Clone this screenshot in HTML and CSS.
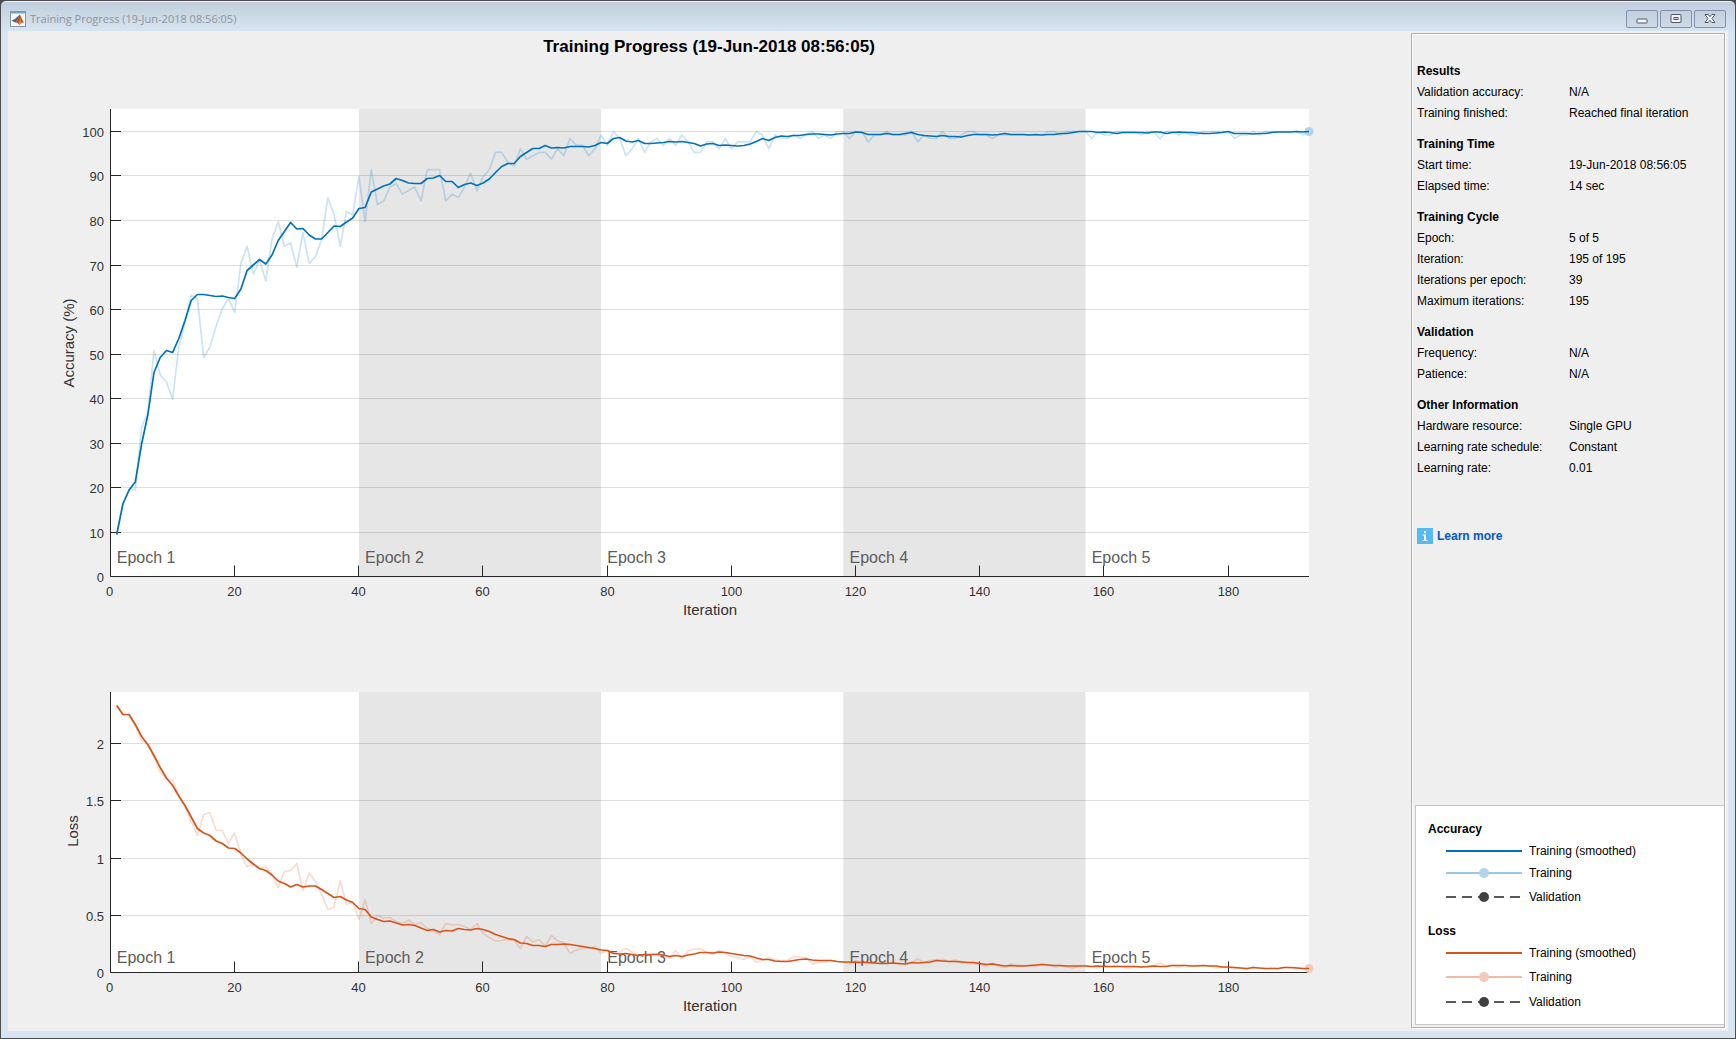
FILE: index.html
```html
<!DOCTYPE html>
<html lang="en">
<head>
<meta charset="utf-8">
<title>Training Progress (19-Jun-2018 08:56:05)</title>
<link rel="stylesheet" href="styles.css">
</head>
<body>
<div class="window">
  <header class="titlebar">
    <svg class="app-icon" viewBox="0 0 16 16" aria-hidden="true">
      <rect x=".5" y=".5" width="15" height="15" fill="#f6f8fa" stroke="#8496a8"/>
      <path d="M1 1h14v1.500H1z" fill="#6fa5cc"/>
      <path d="M1.500 9.500 5 8l2-2 2.500-2-2.500 6-2 1.500z" fill="#3b6a9a"/>
      <path d="M5 11.500 7 10l2.500-6.500c1.500 1 2.500 6 5 8.500-2-1-3-.5-5 2-.8-1.500-2-3-4.500-2.500z" fill="#c8441c"/>
      <path d="M9.500 4c.8 3 .5 6-1 8.500l1 1.500c1-1 1.500-2 2-2.500-1-2-1-5.500-2-7.500z" fill="#f08a2c"/>
    </svg>
    <span class="titlebar-text">Training Progress (19-Jun-2018 08:56:05)</span>
    <div class="window-buttons">
      <button type="button" aria-label="Minimize"><svg viewBox="0 0 14 12"><rect x="2" y="6" width="10" height="4" rx=".5" fill="#f4f6f9" stroke="#4f5568"/></svg></button>
      <button type="button" aria-label="Maximize"><svg viewBox="0 0 14 12"><rect x="2" y="1.500" width="10" height="8" rx=".5" fill="#f4f6f9" stroke="#4f5568"/><rect x="5" y="4.500" width="4" height="2" fill="#c6d2e0" stroke="#4f5568"/></svg></button>
      <button type="button" aria-label="Close"><svg viewBox="0 0 14 12"><path d="M2 1.500h3.200L7 3.700l1.800-2.200H12L9 5.500l3 4H8.800L7 7.300 5.200 9.500H2l3-4z" fill="#f4f6f9" stroke="#4f5568"/></svg></button>
    </div>
  </header>

  <main class="content">
    <svg class="figure" viewBox="8 31 1403 1000" role="img" aria-label="Training accuracy and loss by iteration">
      <text class="figure-title" x="709" y="52">Training Progress (19-Jun-2018 08:56:05)</text>
      <g id="accuracy-plot"></g>
      <g id="loss-plot"></g>
    </svg>

    <aside class="panel">
      <section class="group">
        <h2>Results</h2>
        <dl>
          <dt>Validation accuracy:</dt><dd>N/A</dd>
          <dt>Training finished:</dt><dd>Reached final iteration</dd>
        </dl>
      </section>
      <section class="group">
        <h2>Training Time</h2>
        <dl>
          <dt>Start time:</dt><dd>19-Jun-2018 08:56:05</dd>
          <dt>Elapsed time:</dt><dd>14 sec</dd>
        </dl>
      </section>
      <section class="group">
        <h2>Training Cycle</h2>
        <dl>
          <dt>Epoch:</dt><dd>5 of 5</dd>
          <dt>Iteration:</dt><dd>195 of 195</dd>
          <dt>Iterations per epoch:</dt><dd>39</dd>
          <dt>Maximum iterations:</dt><dd>195</dd>
        </dl>
      </section>
      <section class="group">
        <h2>Validation</h2>
        <dl>
          <dt>Frequency:</dt><dd>N/A</dd>
          <dt>Patience:</dt><dd>N/A</dd>
        </dl>
      </section>
      <section class="group">
        <h2>Other Information</h2>
        <dl>
          <dt>Hardware resource:</dt><dd>Single GPU</dd>
          <dt>Learning rate schedule:</dt><dd>Constant</dd>
          <dt>Learning rate:</dt><dd>0.01</dd>
        </dl>
      </section>
      <a class="learn-more" href="#">
        <svg viewBox="0 0 16 16" aria-hidden="true"><rect width="16" height="16" fill="#56bbf3"/><path d="M7 3h2v2H7zM5.500 6.500H9V12h1.500v1h-5v-1H7V7.500H5.500z" fill="#fff"/></svg>
        Learn more
      </a>

      <section class="legend">
        <h2>Accuracy</h2>
        <ul class="accuracy">
          <li><svg viewBox="0 0 76 12"><path class="smooth" d="M0 6h76"/></svg>Training (smoothed)</li>
          <li><svg viewBox="0 0 76 12"><path class="raw" d="M0 6h76"/><circle class="raw-dot" cx="38" cy="6" r="5"/></svg>Training</li>
          <li class="roomy"><svg viewBox="0 0 76 12"><path class="valid" d="M0 6h76"/><circle class="valid-dot" cx="38" cy="6" r="5"/></svg>Validation</li>
        </ul>
        <h2>Loss</h2>
        <ul class="loss">
          <li><svg viewBox="0 0 76 12"><path class="smooth" d="M0 6h76"/></svg>Training (smoothed)</li>
          <li class="roomy"><svg viewBox="0 0 76 12"><path class="raw" d="M0 6h76"/><circle class="raw-dot" cx="38" cy="6" r="5"/></svg>Training</li>
          <li class="roomy"><svg viewBox="0 0 76 12"><path class="valid" d="M0 6h76"/><circle class="valid-dot" cx="38" cy="6" r="5"/></svg>Validation</li>
        </ul>
      </section>
    </aside>
  </main>
</div>
<script src="charts.js"></script>
</body>
</html>
```
FILE: styles.css
```css
* { box-sizing: border-box; }

body {
  margin: 0;
  background: #4a4a52;
  font-family: "Liberation Sans", Arial, sans-serif;
  font-size: 12px;
  color: #000;
}

.window {
  display: flex;
  flex-direction: column;
  min-height: 100vh;
  padding: 1px 7px 7px;
  border: 1px solid #4c4c52;
  border-radius: 6px 6px 0 0;
  background: linear-gradient(#c0cddc, #d7e4f1 30px);
  box-shadow: inset 0 1px #eef3f8;
}

.titlebar {
  display: flex;
  align-items: center;
  height: 29px;
  padding: 4px 2px 0;
}

.app-icon { width: 16px; height: 16px; }

.titlebar-text {
  flex: 1;
  margin-left: 4px;
  font-family: "Open Sans", sans-serif;
  font-size: 11px;
  line-height: 16px;
  color: #8f9499;
}

.window-buttons { display: flex; gap: 2px; }

.window-buttons button {
  display: grid;
  place-items: center;
  width: 32px;
  height: 18px;
  padding: 0;
  border: 1px solid #8490ae;
  border-radius: 2px;
  background: linear-gradient(#c3cfde, #cddae8);
}

.window-buttons svg { width: 14px; height: 12px; }

.content {
  flex: 1;
  display: flex;
  background: #efefef;
}

.figure {
  flex: 1;
  min-width: 0;
  align-self: flex-start;
}

.figure text { fill: #333; font-size: 13px; }
.figure .figure-title { font-size: 17px; font-weight: bold; fill: #000; text-anchor: middle; }
.figure .axis-title { font-size: 15px; text-anchor: middle; }
.figure .epoch { font-size: 16px; fill: #5c5c5c; }
.figure .x-tick { text-anchor: middle; }
.figure .y-tick { text-anchor: end; }

.plot-area { fill: #fff; }
.band { fill: #e6e6e6; }
.grid { stroke: #262626; stroke-opacity: .15; fill: none; }
.axis { stroke: #262626; fill: none; }

.smooth, .raw, .valid { fill: none; stroke-width: 2; stroke-linejoin: round; }
.accuracy .smooth { stroke: #0072bd; }
.accuracy .raw { stroke: #0072bd; stroke-opacity: .2; }
.accuracy .raw-dot { fill: #b2d5eb; }
.loss .smooth { stroke: #d95319; }
.loss .raw { stroke: #d95319; stroke-opacity: .2; }
.loss .raw-dot { fill: #f4cbba; }
.valid { stroke: #5a5a5a; stroke-dasharray: 10 6; }
.valid-dot { fill: #404040; }

.figure .smooth { stroke-width: 1.700; }
.figure .raw { stroke-width: 1.700; }

.panel {
  display: flex;
  flex-direction: column;
  flex: 0 0 314px;
  margin: 2px 3px 3px 0;
  padding: 27px 0 2px 3px;
  border: 1px solid #b0b0b0;
  box-shadow: inset 1px 1px #fff, 1px 1px #fff;
}

.panel h2, .panel dl, .panel ul { margin: 0; padding: 0; }

.group { margin-bottom: 10px; padding-left: 2px; }
.group h2 { font-size: 12px; line-height: 21px; }
.group dl { display: grid; grid-template-columns: 152px 1fr; line-height: 21px; }
.group dd { margin: 0; }

.learn-more {
  display: flex;
  align-items: center;
  gap: 4px;
  margin: 38px 2px;
  font-weight: bold;
  line-height: 18px;
  color: #0058cc;
  text-decoration: none;
}

.learn-more svg { width: 16px; height: 16px; }

.legend {
  margin-top: auto;
  padding: 12px 0 10px 12px;
  border: 1px solid #c8c8c8;
  border-right: 0;
  background: #fff;
}

.legend h2 { font-size: 12px; line-height: 22px; }
.legend ul { list-style: none; }
.legend ul.accuracy { margin-bottom: 11px; }
.legend li { display: flex; align-items: center; gap: 7px; padding-left: 18px; height: 22px; }
.legend li.roomy { height: 25px; }
.legend li svg { width: 76px; height: 12px; }
.legend .raw { stroke-opacity: .4; }
```
FILE: charts.js
```js
// Horizontal scale shared by both plots: one iteration is 6.21 units wide.
const X0 = 110.5, STEP = 6.21, LAST = 193;
const px = i => X0 + STEP * i;

// Misclassified samples in each mini-batch of 128.
const batchErrors = [
  116,107,103,103,85,81,63,70,72,77,62,55,47,48,65,62,56,51,48,52,
  38,33,41,37,43,31,26,33,32,39,29,38,36,31,19,24,33,23,24,13,
  26,11,21,20,16,15,18,17,16,20,11,11,11,20,18,19,16,12,17,13,
  11,6,6,9,10,5,8,7,6,6,8,5,7,2,4,4,7,5,1,4,
  0,2,7,5,2,6,3,2,4,2,4,1,3,6,6,3,3,5,2,5,
  3,3,3,0,1,5,1,2,2,1,2,1,0,2,1,2,0,0,2,0,
  0,3,1,1,0,1,1,1,0,3,1,2,2,0,2,2,1,0,0,1,
  1,2,1,1,1,1,1,1,1,1,0,0,1,0,0,0,0,2,0,1,
  1,0,0,0,0,1,0,0,2,0,0,1,0,1,1,0,0,0,0,0,
  2,1,1,0,1,0,0,0,0,0,0,1,0];

const accuracySmooth = [
  534.5,504,490,482,444,415,372.5,357.5,350.5,352.5,338.5,320.5,300.5,294.5,294.5,295.5,296.5,296,297.5,298.5,
  289,270.5,265,259.5,264,255,240.5,231.5,222.5,229,228.5,235,239,239,232.5,226,226.5,222,218,208.5,
  207.5,192,189,186,184,178.5,180.5,183,183.5,183.5,178.5,178,175.5,181.5,181.5,187.5,184.5,183,185.5,183,
  179,172.5,166.5,163.5,163.5,156.5,152.5,148.5,148.5,145.5,148,147.5,148,146.5,146.5,146.5,147,145.5,142.5,143.5,
  138.5,137.5,141,142,140.5,143.5,143.5,143,142.5,141.5,142,141.5,142.5,143.5,146,144,143.5,145.5,145,145.5,
  146,145.5,144,141.5,138.5,140.5,137.5,136,136.5,135.5,135.5,134.5,134,134,134.5,135,134,133.5,133.5,132,
  132.5,134.5,134.5,134.5,133.5,134.5,134.5,133.5,132.5,134.5,135.5,136,136.5,135.5,136.5,136.5,137,135.5,134.5,134.5,
  134.5,135,134.5,133.5,134.5,134.5,134.5,135,134.5,135,134.5,134.5,133.5,133.5,132.5,131.5,131.5,131.5,132.5,132,
  132.5,133.5,132.5,132.5,132.5,132.5,133,132,132,133.5,132.5,132,132.5,132.5,133,133.5,133.5,133,132.5,131.5,
  133.5,133.5,133.5,134,133.5,133.5,132.5,132,132,132,131.5,132,131.5];

const lossRaw = [
  705.5,714.5,715,725.5,740,744.5,757,772.5,779,780,796,806.5,821.5,835.5,814.5,812.5,830.5,830.5,843.5,832.5,
  854.5,866.5,864,869,866.5,874.5,887.5,871.5,870.5,863.5,890.5,873,881.5,894.5,909.5,907,880.5,904.5,901.5,919.5,
  899.5,923.5,915.5,918,917.5,921.5,923.5,920,924.5,922.5,928.5,930.5,934.5,923.5,925,924.5,926.5,929.5,923.5,933.5,
  937.5,941,940.5,939.5,940.5,948.5,936.5,942,939.5,946,935.5,941,942.5,953.5,950,948.5,948.5,946.5,953.5,950,
  952.5,952,948.5,952,956,956.5,954.5,953.5,955.5,958.5,950.5,958.5,951,949,948.5,952.5,954.5,950.5,953.5,956.5,
  957.5,959.5,956.5,962.5,960.5,957.5,959.5,961,960.5,956.5,957,957.5,964,962.5,962,960.5,961.5,962,964,960.5,
  962,963.5,963.5,962.5,961.5,963,964.5,964.5,963,958.5,963,960.5,959.5,959.5,961.5,960,961.5,962.5,963.5,965,
  966,963,966.5,967.5,964,965,965.5,966,966.5,964,965,967,966,967,968,966.5,965,967,968,966,
  967,965.5,967,968,967,966.5,967.5,965.5,962.5,966,965,967.5,965,965.5,965,965.5,966,968,967,967.5,
  969,968,969.5,967,968.5,969,968,969,967,968,967,969,968.5];

const lossSmooth = [
  705.5,714.5,714.5,724.5,736.5,744.5,755.5,767.5,778,785.5,796,805.5,817,828.5,833,835.5,841,843.5,848,848.5,
  853,859,864,868.5,870.5,875,881,883.5,887,884.5,887,886,886,889.5,893.5,897.5,896.5,900,902.5,908.5,
  909.5,917,919.5,921.5,921,923,925,924.5,925.5,928,930.5,929.5,932,930.5,931,928.5,929.5,930,928.5,929.5,
  931.5,934.5,936.5,938.5,939.5,943,943.5,945.5,945.5,946.5,944.5,944.5,944,944.5,945.5,946.5,947.5,948.5,950,950.5,
  953.5,954,953.5,954.5,955.5,954.5,954.5,954.5,955,956.5,955.5,956.5,955,954,952.5,952.5,953,952,952.5,953.5,
  954.5,955.5,956,958,959.5,959.5,961,961.5,961.5,960.5,959.5,959,960,960.5,960.5,960.5,961.5,962,962,962.5,
  962.5,962.5,963,963.5,963.5,963,963.5,964,962.5,963,962.5,962,960.5,961,961.5,961.5,962,962.5,962.5,963.5,
  964.5,964,965,966,965.5,966,966,965.5,965,964.5,965,965.5,965.5,966,966,966,966,966.5,966,966.5,
  966.5,966.5,966.5,966.5,966.5,967,966.5,966,966.5,966.5,965.5,965.5,965.5,966,966,965.5,966,966,967,967,
  967.5,968,968.5,967.5,968,968.5,968.5,968.5,967.5,967.5,968,968.5,968.5];

const points = ys => ys.map((y, k) => `${px(k + 1).toFixed(1)},${y.toFixed(1)}`).join(' ');

function plot(id, o) {
  const right = px(LAST);
  const s = [`<rect class="plot-area" x="110" y="${o.top}" width="${right - 110}" height="${o.base - o.top}"/>`];
  for (const [a, b] of [[40, 79], [118, 157]])
    s.push(`<rect class="band" x="${px(a)}" y="${o.top}" width="${px(b) - px(a)}" height="${o.base - o.top}"/>`);
  for (const [y] of o.ticks)
    if (y !== o.base) s.push(`<path class="grid" d="M121 ${y}H${right}"/>`);
  s.push(`<path class="axis" d="M110.5 ${o.top}V${o.base}H${right}"/>`);
  for (const [y, label] of o.ticks) {
    if (y !== o.base) s.push(`<path class="axis" d="M110 ${y}h11"/>`);
    s.push(`<text class="y-tick" x="104" y="${y + 5}">${label}</text>`);
  }
  for (let i = 0; i <= 180; i += 20) {
    const x = Math.floor(px(i) - 0.2) + 0.5;
    s.push(`<path class="axis" d="M${x} ${o.base}v-11"/>`);
    s.push(`<text class="x-tick" x="${x - (i ? 0 : 1)}" y="${o.base + 19}">${i}</text>`);
  }
  [1, 41, 80, 119, 158].forEach((i, k) =>
    s.push(`<text class="epoch" x="${px(i)}" y="${o.epochY}">Epoch ${k + 1}</text>`));
  s.push(`<text class="axis-title" x="710" y="${o.base + 38}">Iteration</text>`);
  s.push(`<text class="axis-title" transform="translate(${o.titleX} ${o.titleY}) rotate(-90)">${o.title}</text>`);
  s.push(`<g class="${o.series}"><polyline class="raw" points="${points(o.raw)}"/>` +
    `<circle class="raw-dot" cx="${right}" cy="${o.raw[LAST - 1]}" r="4.500"/>` +
    `<polyline class="smooth" points="${points(o.smooth)}"/></g>`);
  document.getElementById(id).innerHTML = s.join('');
}

plot('accuracy-plot', {
  series: 'accuracy', title: 'Accuracy (%)', titleX: 74, titleY: 343,
  top: 109, base: 576.5, epochY: 563,
  ticks: [[576.5, '0'], [532.5, '10'], [487.5, '20'], [443.5, '30'], [398.5, '40'], [354.5, '50'],
    [309.5, '60'], [265.5, '70'], [220.5, '80'], [175.5, '90'], [131.5, '100']],
  raw: batchErrors.map(n => 131.5 + 3.477 * n), smooth: accuracySmooth
});

plot('loss-plot', {
  series: 'loss', title: 'Loss', titleX: 78, titleY: 831,
  top: 692, base: 972.5, epochY: 963,
  ticks: [[972.5, '0'], [915.5, '0.5'], [858.5, '1'], [800.5, '1.5'], [743.5, '2']],
  raw: lossRaw, smooth: lossSmooth
});
```
